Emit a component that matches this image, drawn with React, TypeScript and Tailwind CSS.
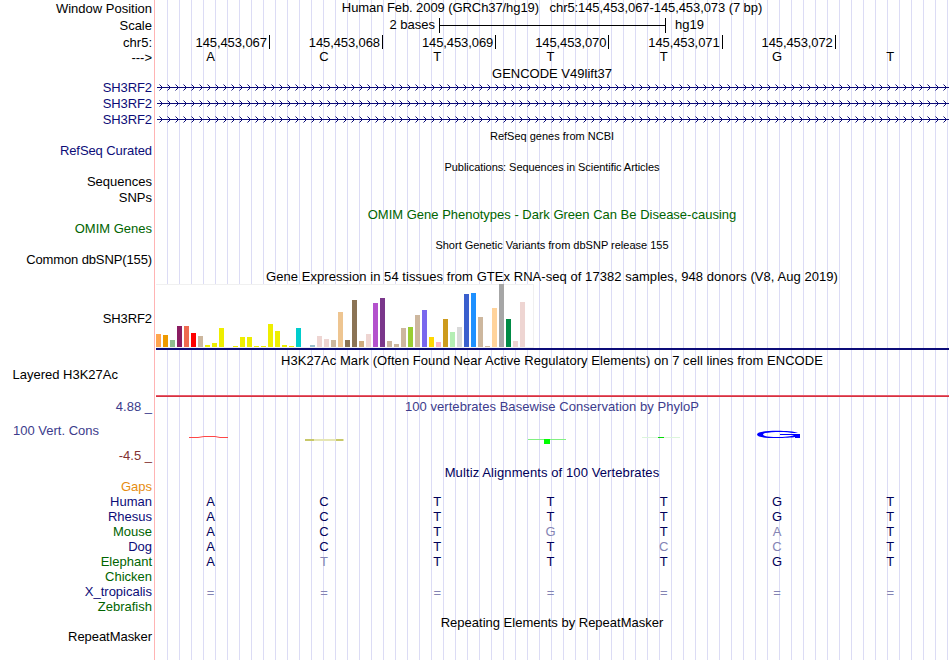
import type { ReactNode } from "react";

const bars: [number, string][] = [
  [13, "#ffa54f"], [12, "#ee9a00"], [7, "#8fbc8f"], [21, "#8b1c62"], [21, "#ee6a50"], [14, "#ff0000"],
  [11, "#cdb79e"], [2, "#eeee00"], [4, "#eeee00"], [19, "#eeee00"], [0, "#eeee00"], [1, "#eeee00"],
  [10, "#eeee00"], [10, "#eeee00"], [1, "#eeee00"], [1, "#eeee00"], [23, "#eeee00"], [16, "#eeee00"],
  [2, "#eeee00"], [1, "#eeee00"], [19, "#00cdcd"], [0, "#9ac0cd"], [2, "#9ac0cd"], [11, "#eed5d2"],
  [8, "#eed5d2"], [7, "#cdb79e"], [35, "#eec591"], [7, "#8b7355"], [47, "#8b7355"], [6, "#cdaa7d"],
  [13, "#eed5d2"], [44, "#b452cd"], [49, "#7a378b"], [6, "#cdb79e"], [3, "#cdb79e"], [19, "#cdb79e"],
  [20, "#9acd32"], [32, "#cdb79e"], [37, "#7a67ee"], [10, "#ffd700"], [5, "#ffb6c1"], [28, "#cd9b1d"],
  [15, "#b4eeb4"], [20, "#d9d9d9"], [53, "#3a5fcd"], [54, "#1e90ff"], [30, "#cdb79e"], [1, "#cdb79e"],
  [39, "#ffd39b"], [63, "#a6a6a6"], [28, "#008b45"], [6, "#eed5d2"], [45, "#eed5d2"], [0, "#ff00ff"],
];

interface RowProps {
  h: string;
  label?: ReactNode;
  labelClass?: string;
  title?: ReactNode;
  titleClass?: string;
  children?: ReactNode;
}

function Row({ h, label, labelClass = "", title, titleClass = "", children }: RowProps) {
  return (
    <div className={`flex shrink-0 items-start ${h}`}>
      <div className={`w-[152px] shrink-0 text-right ${labelClass}`}>{label}</div>
      <div className="ml-1 min-w-0 flex-1">
        {title && <div className={`w-[792px] text-center ${titleClass}`}>{title}</div>}
        {children}
      </div>
    </div>
  );
}

const columns = "ml-[-2px] grid w-[793px] grid-cols-7 text-center";

function Bases({ seq, className = "" }: { seq: string; className?: string }) {
  return (
    <div className={`${columns} ${className}`}>
      {seq.split("").map((base, i) => (
        <span key={i} className={base === base.toLowerCase() ? "text-[#8484b4]" : ""}>
          {base.toUpperCase()}
        </span>
      ))}
    </div>
  );
}

function Transcript() {
  return (
    <svg className="block h-4 w-[793px]" viewBox="156 0 793 16" shapeRendering="crispEdges">
      <rect x="157" y="7" width="792" height="1" fill="#0c0c78" />
      {Array.from({ length: 99 }, (_, i) => {
        const x = 162 + i * 8;
        return (
          <g key={i} fill="#0c0c78">
            <rect x={x - 1} y="6" width="1" height="1" />
            <rect x={x - 1} y="8" width="1" height="1" />
            <rect x={x - 2} y="5" width="1" height="1" />
            <rect x={x - 2} y="9" width="1" height="1" />
            <rect x={x - 3} y="4" width="1" height="1" opacity="0.5" />
            <rect x={x - 3} y="10" width="1" height="1" opacity="0.5" />
          </g>
        );
      })}
    </svg>
  );
}

const positions = ["067", "068", "069", "070", "071", "072"];

const species: [string, string, string][] = [
  ["Human", "text-[#0c0c78]", "ACTTTGT"],
  ["Rhesus", "text-[#0c0c78]", "ACTTTGT"],
  ["Mouse", "text-[#006400]", "ACTgTaT"],
  ["Dog", "text-[#0c0c78]", "ACTTccT"],
  ["Elephant", "text-[#006400]", "AtTTTGT"],
  ["Chicken", "text-[#006400]", ""],
  ["X_tropicalis", "text-[#0c0c78]", "======="],
  ["Zebrafish", "text-[#006400]", ""],
];

export default function App() {
  return (
    <div className="h-[660px] w-[950px] overflow-hidden bg-white">
      <div className="flex h-full flex-col whitespace-pre bg-[linear-gradient(to_right,#ffb4b4_1px,transparent_1px),repeating-linear-gradient(to_right,transparent_0_11px,#dcdcf5_11px_12px)] bg-[position:154px_0,156px_0] bg-no-repeat [font-family:'Liberation_Sans',Arial,sans-serif] text-[13px] leading-[15px] text-black">
        <Row h="h-[17px]" label="Window Position" labelClass="pt-px" title="Human Feb. 2009 (GRCh37/hg19)   chr5:145,453,067-145,453,073 (7 bp)" titleClass="tracking-[-0.08px]" />
        <Row h="h-[18px]" label="Scale" labelClass="pt-px">
          <div className="flex">
            <span className="w-[279px] text-right">2 bases</span>
            <span className="ml-1 mt-px flex h-[15px] w-[227px] items-center border-x border-black">
              <span className="h-px w-full bg-black" />
            </span>
            <span className="ml-[9px]">hg19</span>
          </div>
        </Row>
        <Row h="h-[14px]" label="chr5:">
          <div className="ml-[0.6px] flex w-[680px]">
            {positions.map((p) => (
              <span key={p} className="w-[113.2px] shrink-0 text-right">
                <span className="inline-block h-[14px] border-r border-black pr-[2px] leading-[15px] tracking-[-0.1px]">145,453,{p}</span>
              </span>
            ))}
          </div>
        </Row>
        <Row h="h-[17px]" label="--->" labelClass="pt-px">
          <Bases seq="ACTTTGT" />
        </Row>
        <Row h="h-[14px]" title="GENCODE V49lift37" />
        {[0, 1, 2].map((i) => (
          <Row key={i} h="h-4" label="SH3RF2" labelClass="text-[#0c0c78] tracking-[-0.1px]">
            <Transcript />
          </Row>
        ))}
        <Row h="h-[15px]" title="RefSeq genes from NCBI" titleClass="pt-px text-[11px]" />
        <Row h="h-4" label="RefSeq Curated" labelClass="text-[#0c0c78] tracking-[-0.08px]" />
        <Row h="h-[15px]" title="Publications: Sequences in Scientific Articles" titleClass="pt-px text-[11px] tracking-[-0.06px]" />
        <Row h="h-4" label="Sequences" />
        <Row h="h-[17px]" label="SNPs" />
        <Row h="h-[14px]" title="OMIM Gene Phenotypes - Dark Green Can Be Disease-causing" titleClass="text-[#006400]" />
        <Row h="h-4" label="OMIM Genes" labelClass="text-[#006400]" />
        <Row h="h-[15px]" title="Short Genetic Variants from dbSNP release 155" titleClass="pt-px text-[11px]" />
        <Row h="h-[17px]" label="Common dbSNP(155)" labelClass="tracking-[-0.12px]" />
        <Row h="h-[15px]" title="Gene Expression in 54 tissues from GTEx RNA-seq of 17382 samples, 948 donors (V8, Aug 2019)" titleClass="tracking-[0.05px]" />
        <Row h="h-[69px]" label="SH3RF2" labelClass="pt-[27px] tracking-[-0.1px]">
          <div className="flex h-16 w-[378px] items-end gap-[2px] border border-l-0 border-[#f0f0f0] bg-white">
            {bars.map(([height, color], i) => (
              <div key={i} className="w-[5px] shrink-0" style={{ height, backgroundColor: color }} />
            ))}
          </div>
          <div className="h-[2px] w-[793px] bg-[#0c0c78]" />
        </Row>
        <Row h="h-[14px]" title="H3K27Ac Mark (Often Found Near Active Regulatory Elements) on 7 cell lines from ENCODE" titleClass="tracking-[0.05px]" />
        <Row h="h-8" label="Layered H3K27Ac" labelClass="pr-[34px]">
          <div className="mt-[28px] h-px w-[793px] bg-[#e65a6a]" />
          <div className="h-px w-[793px] bg-[#d7323f]" />
        </Row>
        <Row h="h-[24px]" label="4.88 _" labelClass="text-[#3c3c8c]" title="100 vertebrates Basewise Conservation by PhyloP" titleClass="text-[#3c3c8c] tracking-[0.04px]" />
        <Row h="h-[25px]" label="100 Vert. Cons" labelClass="pr-[53px] text-[#3c3c8c]">
          <svg className="block h-[25px] w-[793px]" viewBox="156 423 793 25">
            <path d="M189 437.5H198L204 436.5H215L220 437.5H228" fill="none" stroke="#ff4646" strokeWidth="1" />
            <path d="M305 440H344" stroke="#e6e6b4" strokeWidth="2" />
            <path d="M305 440H314M336 440H343" stroke="#bebe50" strokeWidth="1.5" />
            <path d="M528 439.5H566" stroke="#82f082" strokeWidth="1" />
            <rect x="544" y="439" width="6" height="5" fill="#00ff00" />
            <path d="M642 437.5H680" stroke="#dcf5dc" strokeWidth="1" />
            <rect x="658" y="437" width="6" height="1" fill="#00dc00" />
            <path fillRule="evenodd" d="M798 433C792 430.5 767 430 759 432.5Q755 434.5 759 436.5C767 439 790 438 795 437V438H800V434H780V435H794C790 437.5 770 437.5 765 436Q761 434.5 765 433C772 431.5 788 431.5 793 433Z" fill="#0000ff" />
          </svg>
        </Row>
        <Row h="h-[17px]" label="-4.5 _" labelClass="text-[#823232]" />
        <Row h="h-[14px]" title="Multiz Alignments of 100 Vertebrates" titleClass="text-[#00005a] tracking-[0.1px]" />
        <Row h="h-[15px]" label="Gaps" labelClass="text-[#e68c0f]" />
        {species.map(([name, color, seq]) => (
          <Row key={name} h="h-[15px]" label={name} labelClass={color}>
            <Bases seq={seq} className={seq.startsWith("=") ? "pt-px text-[#8484b4]" : "text-[#00005a]"} />
          </Row>
        ))}
        <Row h="h-[15px]" title="Repeating Elements by RepeatMasker" titleClass="pt-px" />
        <Row h="h-[17px]" label="RepeatMasker" labelClass="tracking-[-0.05px]" />
      </div>
    </div>
  );
}
